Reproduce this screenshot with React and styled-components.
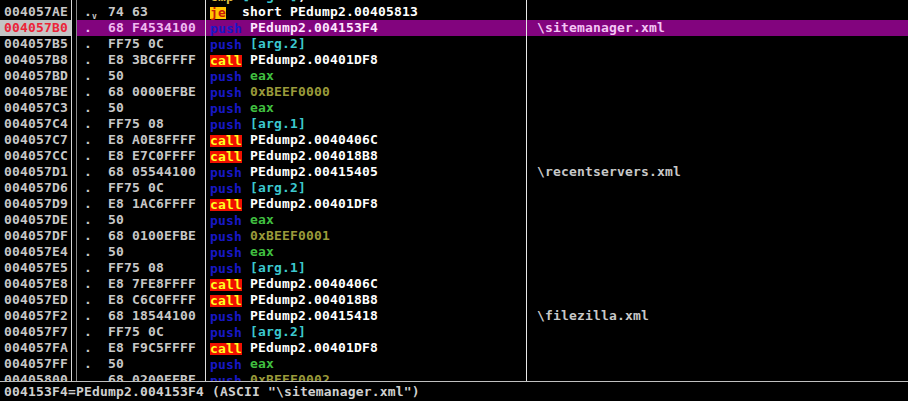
import styled, { createGlobalStyle } from "styled-components";

const Global = createGlobalStyle`
  html, body {
    margin: 0;
    padding: 0;
    background: #000;
  }
  body {
    font-family: "DejaVu Sans Mono", "Liberation Mono", monospace;
    font-size: 13px;
    font-weight: bold;
    letter-spacing: 0.17px;
  }
`;

const rows = [
  { addr: "004057AB", hex: "3945 08", mn: "cmp", kind: "cmp", ops: [["[arg.1]", "arg"], [",", "plain"], ["eax", "reg"]] },
  { addr: "004057AE", hex: "74 63", jump: true, mn: "je", kind: "jcc", ops: [["short ", "plain"], ["PEdump2.00405813", "plain"]] },
  { addr: "004057B0", hex: "68 F4534100", mn: "push", kind: "push", ops: [["PEdump2.004153F4", "plain"]], comment: "\\sitemanager.xml", sel: true },
  { addr: "004057B5", hex: "FF75 0C", mn: "push", kind: "push", ops: [["[arg.2]", "arg"]] },
  { addr: "004057B8", hex: "E8 3BC6FFFF", mn: "call", kind: "call", ops: [["PEdump2.00401DF8", "plain"]] },
  { addr: "004057BD", hex: "50", mn: "push", kind: "push", ops: [["eax", "reg"]] },
  { addr: "004057BE", hex: "68 0000EFBE", mn: "push", kind: "push", ops: [["0xBEEF0000", "const"]] },
  { addr: "004057C3", hex: "50", mn: "push", kind: "push", ops: [["eax", "reg"]] },
  { addr: "004057C4", hex: "FF75 08", mn: "push", kind: "push", ops: [["[arg.1]", "arg"]] },
  { addr: "004057C7", hex: "E8 A0E8FFFF", mn: "call", kind: "call", ops: [["PEdump2.0040406C", "plain"]] },
  { addr: "004057CC", hex: "E8 E7C0FFFF", mn: "call", kind: "call", ops: [["PEdump2.004018B8", "plain"]] },
  { addr: "004057D1", hex: "68 05544100", mn: "push", kind: "push", ops: [["PEdump2.00415405", "plain"]], comment: "\\recentservers.xml" },
  { addr: "004057D6", hex: "FF75 0C", mn: "push", kind: "push", ops: [["[arg.2]", "arg"]] },
  { addr: "004057D9", hex: "E8 1AC6FFFF", mn: "call", kind: "call", ops: [["PEdump2.00401DF8", "plain"]] },
  { addr: "004057DE", hex: "50", mn: "push", kind: "push", ops: [["eax", "reg"]] },
  { addr: "004057DF", hex: "68 0100EFBE", mn: "push", kind: "push", ops: [["0xBEEF0001", "const"]] },
  { addr: "004057E4", hex: "50", mn: "push", kind: "push", ops: [["eax", "reg"]] },
  { addr: "004057E5", hex: "FF75 08", mn: "push", kind: "push", ops: [["[arg.1]", "arg"]] },
  { addr: "004057E8", hex: "E8 7FE8FFFF", mn: "call", kind: "call", ops: [["PEdump2.0040406C", "plain"]] },
  { addr: "004057ED", hex: "E8 C6C0FFFF", mn: "call", kind: "call", ops: [["PEdump2.004018B8", "plain"]] },
  { addr: "004057F2", hex: "68 18544100", mn: "push", kind: "push", ops: [["PEdump2.00415418", "plain"]], comment: "\\filezilla.xml" },
  { addr: "004057F7", hex: "FF75 0C", mn: "push", kind: "push", ops: [["[arg.2]", "arg"]] },
  { addr: "004057FA", hex: "E8 F9C5FFFF", mn: "call", kind: "call", ops: [["PEdump2.00401DF8", "plain"]] },
  { addr: "004057FF", hex: "50", mn: "push", kind: "push", ops: [["eax", "reg"]] },
  { addr: "00405800", hex: "68 0200EFBE", mn: "push", kind: "push", ops: [["0xBEEF0002", "const"]] },
];

const opColors = {
  plain: "#ffffff",
  arg: "#3cc8d0",
  reg: "#40c040",
  const: "#9a9a3a",
};

const mnStyles = {
  push: { fg: "#1818c8", bg: "transparent" },
  call: { fg: "#ffff20", bg: "#f01000" },
  jcc: { fg: "#c81808", bg: "#ffc400" },
  cmp: { fg: "#e0c040", bg: "transparent" },
};

export default function App() {
  return (
    <>
      <Global />
      <Window>
        <Listing>
          <Scroller>
            {rows.map((r) => (
              <Row key={r.addr}>
                <AddrCell $sel={r.sel}>{r.addr}</AddrCell>
                <Gutter />
                <HexCell $sel={r.sel}>
                  <Slot>.</Slot>
                  <Slot>{r.jump ? <Mark>v</Mark> : null}</Slot>
                  <Slot />
                  {r.hex}
                </HexCell>
                <DisasmCell $sel={r.sel}>
                  <Mnemonic $kind={r.kind}>{r.mn}</Mnemonic>
                  <Slot />
                  {r.mn.length < 3 ? <Slot /> : null}
                  {r.ops.map(([t, k], i) => (
                    <Operand key={i} $kind={k} $sel={r.sel}>
                      {t}
                    </Operand>
                  ))}
                </DisasmCell>
                <CommentCell $sel={r.sel}>{r.comment}</CommentCell>
              </Row>
            ))}
          </Scroller>
        </Listing>
        <StatusBar>004153F4=PEdump2.004153F4 (ASCII "\sitemanager.xml")</StatusBar>
      </Window>
    </>
  );
}

const Window = styled.div`
  width: 908px;
  height: 401px;
  display: flex;
  flex-direction: column;
  background: #000;
  overflow: hidden;
`;

const Listing = styled.div`
  height: 381px;
  overflow: hidden;
  flex: none;
`;

const Scroller = styled.div`
  margin-top: -12px;
  display: flex;
  flex-direction: column;
`;

const Row = styled.div`
  display: grid;
  grid-template-columns: 72px 4px 130px 321px 1fr;
  height: 16px;
  line-height: 16px;
  white-space: pre;
`;

const AddrCell = styled.div`
  padding-left: 4px;
  color: ${(p) => (p.$sel ? "#ec2438" : "#c8c8c8")};
  background: ${(p) => (p.$sel ? "#c4c4c4" : "#000")};
  border-right: 1px solid #d8d8d8;
`;

const Gutter = styled.div`
  background: #000;
`;

const HexCell = styled.div`
  padding-left: 7px;
  color: ${(p) => (p.$sel ? "#f0b8f0" : "#c8c8c8")};
  background: ${(p) => (p.$sel ? "#82047e" : "#000")};
  border-left: 1px solid #8a8a8a;
  border-right: 1px solid #e0e0e0;
  overflow: hidden;
`;

const Slot = styled.span`
  display: inline-block;
  width: 8px;
  letter-spacing: 0;
  text-align: left;
`;

const Mark = styled.span`
  font-size: 8px;
  vertical-align: -3px;
  color: #c8c8c8;
`;

const DisasmCell = styled.div`
  padding-left: 4px;
  background: ${(p) => (p.$sel ? "#82047e" : "#000")};
  border-right: 1px solid #e8e8e8;
  overflow: hidden;
`;

const Mnemonic = styled.span`
  display: inline-block;
  height: 12px;
  line-height: 12px;
  vertical-align: -1px;
  color: ${(p) => mnStyles[p.$kind].fg};
  background: ${(p) => mnStyles[p.$kind].bg};
`;

const Operand = styled.span`
  color: ${(p) => (p.$sel ? "#ffe4ff" : opColors[p.$kind])};
`;

const CommentCell = styled.div`
  padding-left: 10px;
  color: ${(p) => (p.$sel ? "#f4c4f4" : "#c8c8c8")};
  background: ${(p) => (p.$sel ? "#82047e" : "#000")};
`;

const StatusBar = styled.div`
  flex: 1;
  border-top: 1px solid #c0c0c0;
  padding-left: 4px;
  line-height: 19px;
  color: #d0d0d0;
  white-space: pre;
`;
